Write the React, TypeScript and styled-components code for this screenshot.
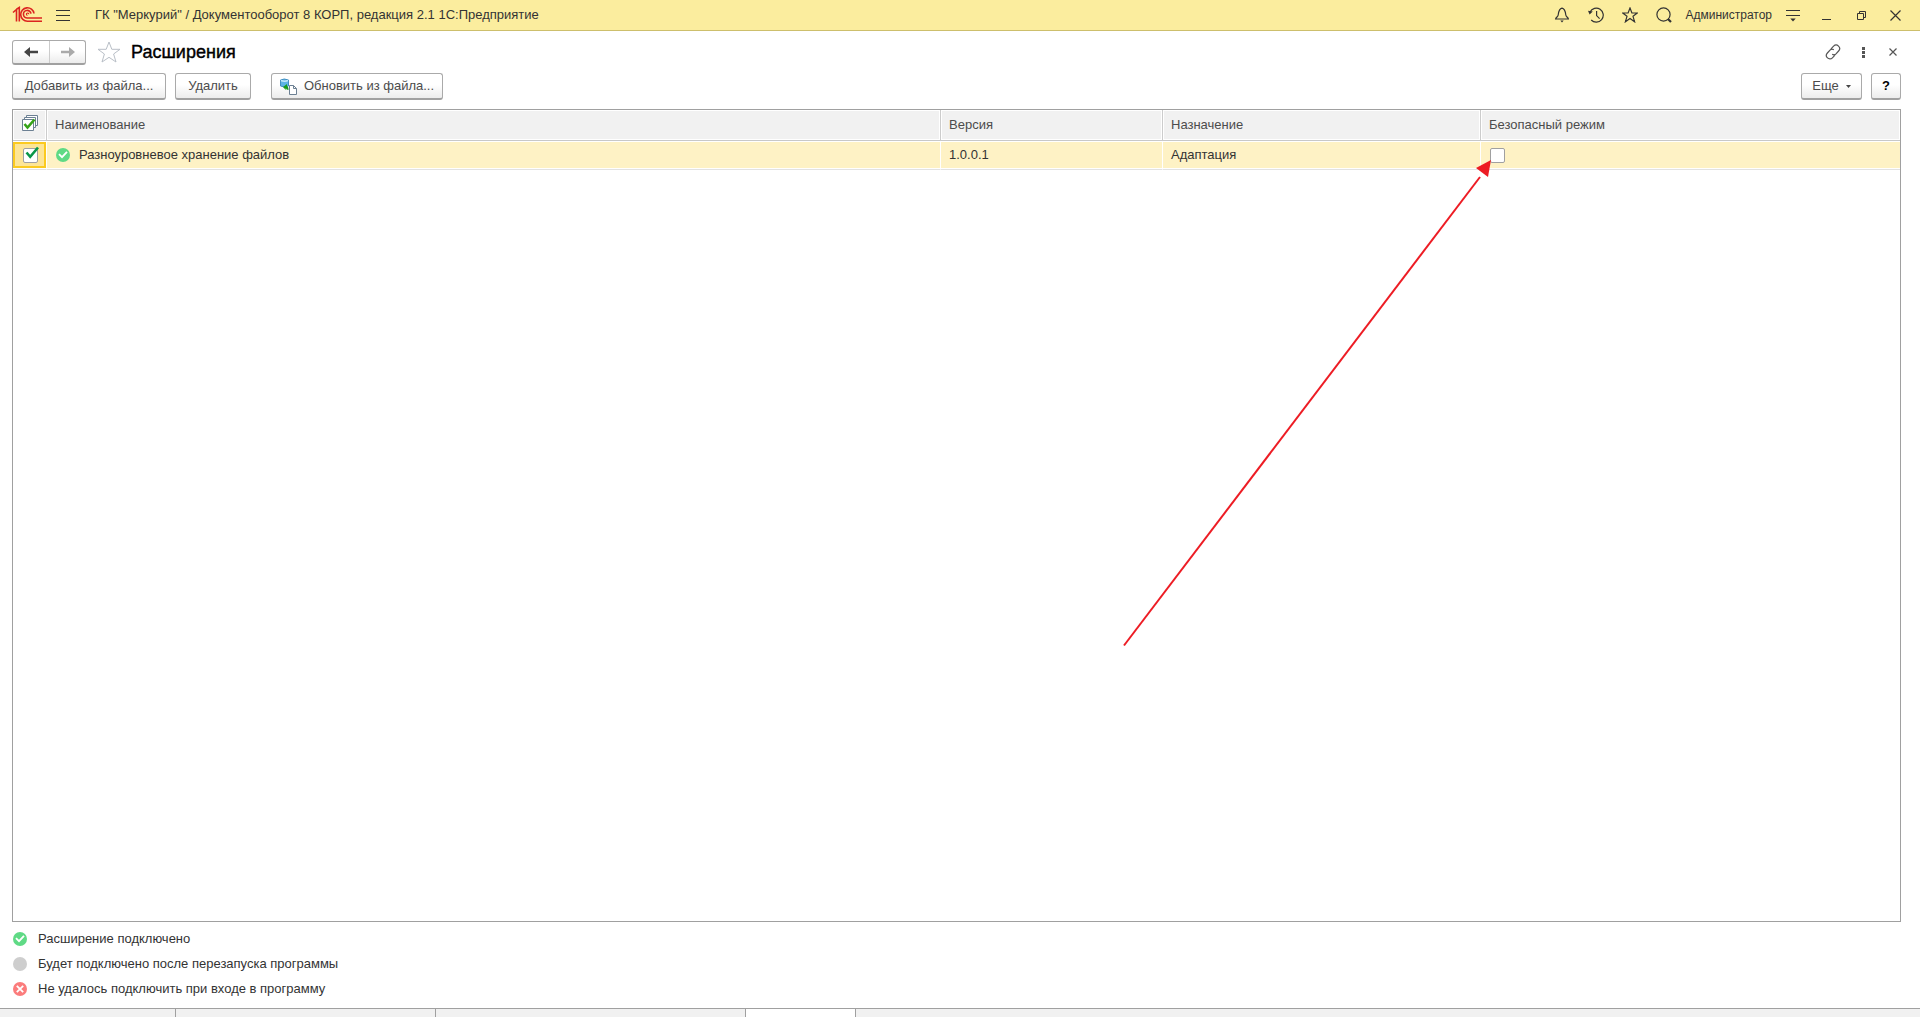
import React, { useState } from "react";
import styled, { createGlobalStyle } from "styled-components";

const GlobalStyle = createGlobalStyle`
  *, *::before, *::after { box-sizing: border-box; }
  body {
    margin: 0;
    background: #fff;
    color: #333;
    font: 13px/16px "Liberation Sans", Arial, sans-serif;
  }
  button, input { font: inherit; color: inherit; margin: 0; }
`;

const Page = styled.div`
  display: flex;
  flex-direction: column;
  min-height: 100vh;
`;

const TitleBar = styled.header`
  display: flex;
  align-items: center;
  height: 31px;
  padding: 0 8px 0 12px;
  background: #fbed9e;
  border-bottom: 1px solid #cdbf6c;
`;

const AppTitle = styled.span`
  flex: 1;
  margin-left: 12px;
  white-space: nowrap;
`;

const IconButton = styled.button<{ $w?: number }>`
  display: flex;
  align-items: center;
  justify-content: center;
  width: ${(p) => p.$w ?? 34}px;
  height: 24px;
  padding: 0;
  border: 0;
  background: none;
  color: #333;
`;

const UserButton = styled.button`
  padding: 0 4px;
  border: 0;
  background: none;
  font-size: 12px;
`;

const FormHeader = styled.div`
  display: flex;
  align-items: center;
  height: 42px;
  padding: 0 12px;
`;

const NavGroup = styled.div`
  display: flex;
  height: 25px;
  border: 1px solid #aaa;
  border-bottom: 2px solid #a0a0a0;
  border-radius: 3px;
  background: linear-gradient(#fff 45%, #ececec);
`;

const NavButton = styled.button<{ $divided?: boolean }>`
  display: flex;
  align-items: center;
  justify-content: center;
  width: 36px;
  padding: 0;
  border: 0;
  border-left: ${(p) => (p.$divided ? "1px solid #ccc" : "0")};
  background: none;
  color: ${(p) => (p.$divided ? "#aaa" : "#444")};
`;

const FormTitle = styled.h1`
  flex: 1;
  margin: 0;
  color: #000;
  font-size: 18px;
  line-height: 24px;
  font-weight: 400;
  -webkit-text-stroke: 0.4px #000;
`;

const Toolbar = styled.div`
  display: flex;
  align-items: center;
  gap: 9px;
  padding: 0 19px 9px 12px;
`;

const Spacer = styled.div<{ $w?: number }>`
  flex: ${(p) => (p.$w ? `0 0 ${p.$w}px` : "1")};
`;

const CommandButton = styled.button<{ $w: number; $strong?: boolean }>`
  display: flex;
  align-items: center;
  justify-content: center;
  gap: 7px;
  width: ${(p) => p.$w}px;
  height: 27px;
  padding: 0;
  border: 1px solid #aaa;
  border-bottom: 2px solid #a0a0a0;
  border-radius: 3px;
  background: linear-gradient(#fff 45%, #ececec);
  color: ${(p) => (p.$strong ? "#000" : "#4c4c4c")};
  font-weight: ${(p) => (p.$strong ? 700 : 400)};
  white-space: nowrap;
`;

const ListPane = styled.main`
  position: relative;
  flex: 1;
  margin: 0 19px 0 12px;
  border: 1px solid #a0a0a0;
`;

const Table = styled.table`
  width: 100%;
  table-layout: fixed;
  border-collapse: separate;
  border-spacing: 0;
`;

const Col = styled.col<{ $w?: number }>`
  width: ${(p) => (p.$w ? `${p.$w}px` : "auto")};
`;

const HeadCell = styled.th`
  height: 31px;
  padding: 0 8px;
  border-right: 1px solid #ccc;
  border-bottom: 1px solid #c8c8c8;
  background: #f1f1f1;
  box-shadow: inset 0 0 0 1px #fff;
  color: #4c4c4c;
  font-weight: 400;
  text-align: left;
  &:first-child { padding: 0 0 0 9px; }
  &:last-child { border-right: 0; }
`;

const Cell = styled.td`
  height: 29px;
  padding: 0 8px;
  border-right: 1px solid #fff;
  border-bottom: 1px solid #e2e2e2;
  background: #fef2c5;
  box-shadow: inset 0 1px #fff, inset 0 -1px #fff;
  &:last-child { border-right: 0; }
`;

const CurrentCell = styled(Cell)`
  padding: 1px 0;
`;

const Focus = styled.div`
  display: flex;
  align-items: center;
  height: 26px;
  padding-left: 7px;
  border: 2px solid #fbca20;
  background: #fde596;
`;

const NameContent = styled.div`
  display: flex;
  align-items: center;
  gap: 9px;
  padding-left: 1px;
`;

const CheckLabel = styled.label`
  position: relative;
  display: flex;
  width: 15px;
  height: 15px;
  margin-left: 1px;
`;

const CheckInput = styled.input`
  appearance: none;
  width: 15px;
  height: 15px;
  border: 1px solid #a0a0a0;
  border-radius: 2px;
  background: #fff;
  & + svg { display: none; }
  &:checked + svg { display: block; }
`;

const CheckMark = styled.svg`
  position: absolute;
  left: 2px;
  top: -2px;
  pointer-events: none;
`;

const Arrow = styled.svg`
  position: absolute;
  top: 50px;
  right: 408px;
  pointer-events: none;
`;

const Legend = styled.ul`
  margin: 0;
  padding: 4px 12px 7px;
  list-style: none;
`;

const LegendItem = styled.li`
  display: flex;
  align-items: center;
  gap: 11px;
  height: 25px;
  padding-left: 1px;
`;

const WindowTabs = styled.footer`
  display: flex;
  height: 9px;
  border-top: 1px solid #a0a0a0;
  background: #f1f1f1;
`;

const WindowTab = styled.div<{ $w: number; $active?: boolean }>`
  width: ${(p) => p.$w}px;
  border-right: 1px solid #a0a0a0;
  background: ${(p) => (p.$active ? "#fff" : "transparent")};
`;

function Logo() {
  return (
    <svg width="31" height="18" viewBox="0 0 31 18" fill="none" stroke="#dc2420" strokeWidth="1.6" aria-hidden="true">
      <path d="M1 6.5 4.5 3.5V15.5M4.5 3.2 7.3 1.5V15.5" />
      <path d="M22 7.5A6.7 6.7 0 1 0 15.5 15.2H30" />
      <path d="M19 7.6A3.8 3.8 0 1 0 15.5 12H30" />
      <path d="M16.8 8.2A1.2 1.2 0 1 0 15.5 9.4" strokeWidth="1.2" />
    </svg>
  );
}

function Status({ kind }: { kind: "ok" | "wait" | "fail" }) {
  const fill = { ok: "#5fda85", wait: "#cecece", fail: "#fb7c7c" }[kind];
  return (
    <svg width="14" height="14" viewBox="0 0 14 14" fill="none" stroke="#fff" strokeWidth="1.8" aria-hidden="true">
      <circle cx="7" cy="7" r="7" fill={fill} stroke="none" />
      {kind === "ok" && <path d="M3 6.2 6 9.2 11 3.8" />}
      {kind === "fail" && <path d="M3.8 3.8 10.2 10.2M10.2 3.8 3.8 10.2" />}
    </svg>
  );
}

function ArrowIcon({ back }: { back?: boolean }) {
  return (
    <svg width="14" height="10" viewBox="0 0 14 10" aria-hidden="true">
      <path
        d={back ? "M0 5 6 0V10ZM4 3.7H14V6.3H4Z" : "M14 5 8 0V10ZM10 3.7H0V6.3H10Z"}
        fill="currentColor"
      />
    </svg>
  );
}

const stroke = { fill: "none", stroke: "currentColor", strokeWidth: 1.2 };

export default function App() {
  const [active, setActive] = useState(true);
  const [safe, setSafe] = useState(false);

  return (
    <Page>
      <GlobalStyle />
      <TitleBar>
        <Logo />
        <IconButton $w={40} aria-label="Меню">
          <svg width="16" height="13" viewBox="0 0 16 13" {...stroke}>
            <path d="M1 1.5H15M1 6.5H15M1 11.5H15" strokeWidth="1" />
          </svg>
        </IconButton>
        <AppTitle as="span" style={undefined}>
          ГК "Меркурий" / Документооборот 8 КОРП, редакция 2.1 1С:Предприятие
        </AppTitle>
        <IconButton aria-label="Оповещения">
          <svg width="16" height="16" viewBox="0 0 16 16" {...stroke}>
            <path d="M8 1.2C4.8 2 4.6 5 4.2 8 4 9.8 1.8 10.6 1.6 12H14.4C14.2 10.6 12 9.8 11.8 8 11.4 5 11.2 2 8 1.2Z" />
            <path d="M6.3 13.5H9.7L8 15.5Z" fill="currentColor" stroke="none" />
          </svg>
        </IconButton>
        <IconButton aria-label="История">
          <svg width="16" height="16" viewBox="0 0 16 16" {...stroke}>
            <path d="M2 5A7 7 0 1 1 3.2 13M8.6 4V8.6L11.6 11.6" />
            <path d="M0 3.8 4.8 4.5 1.6 7.5Z" fill="currentColor" stroke="none" />
          </svg>
        </IconButton>
        <IconButton aria-label="Избранное">
          <svg width="16" height="16" viewBox="0 0 16 16" {...stroke}>
            <path d="M8 1 9.9 6H15.3L11 9.3 12.6 14.8 8 11.5 3.4 14.8 5 9.3.7 6H6.1Z" />
          </svg>
        </IconButton>
        <IconButton aria-label="Поиск">
          <svg width="16" height="16" viewBox="0 0 16 16" {...stroke}>
            <circle cx="7.5" cy="7.5" r="6.6" />
            <path d="M12 12 15 15" strokeWidth="2.2" />
          </svg>
        </IconButton>
        <UserButton>Администратор</UserButton>
        <IconButton aria-label="Настройки">
          <svg width="14" height="14" viewBox="0 0 14 14" {...stroke}>
            <path d="M0 2.5H14M0 7.5H14" strokeWidth="1" />
            <path d="M4.3 10.5H9.7L7 13.5Z" fill="currentColor" stroke="none" />
          </svg>
        </IconButton>
        <IconButton aria-label="Свернуть">
          <svg width="10" height="12" viewBox="0 0 10 12" {...stroke}>
            <path d="M0 10.5H9" strokeWidth="1" />
          </svg>
        </IconButton>
        <IconButton aria-label="Развернуть">
          <svg width="9" height="9" viewBox="0 0 9 9" {...stroke} strokeWidth="1">
            <path d="M.5 2.5H6.5V8.5H.5ZM2.5 2.5V.5H8.5V6.5H6.5" />
          </svg>
        </IconButton>
        <IconButton aria-label="Закрыть окно">
          <svg width="11" height="11" viewBox="0 0 11 11" {...stroke}>
            <path d="M.5.5 10.5 10.5M10.5.5.5 10.5" />
          </svg>
        </IconButton>
      </TitleBar>

      <FormHeader>
        <NavGroup>
          <NavButton aria-label="Назад"><ArrowIcon back /></NavButton>
          <NavButton $divided aria-label="Вперед"><ArrowIcon /></NavButton>
        </NavGroup>
        <IconButton $w={45} aria-label="Добавить в избранное">
          <svg width="24" height="22" viewBox="0 0 24 22" fill="none" stroke="#b9bfc7" strokeWidth="1">
            <path d="M12 1 14.8 8.3H23L16.6 13 19 21 12 16.3 5 21 7.4 13 1 8.3H9.2Z" />
          </svg>
        </IconButton>
        <FormTitle>Расширения</FormTitle>
        <IconButton $w={30} aria-label="Ссылка">
          <svg width="16" height="16" viewBox="0 0 16 16" {...stroke} stroke="#555">
            <path d="M6 4.8 8.6 2.2A3.2 3.2 0 0 1 13.6 7L11 9.8A3 3 0 0 1 7.2 10.2M10 11.2 7.4 13.8A3.2 3.2 0 0 1 2.4 9L5 6.2A3 3 0 0 1 8.8 5.8" />
          </svg>
        </IconButton>
        <IconButton $w={30} aria-label="Дополнительно">
          <svg width="3" height="11" viewBox="0 0 3 11" fill="#555">
            <path d="M0 0H3V3H0ZM0 4H3V7H0ZM0 8H3V11H0Z" />
          </svg>
        </IconButton>
        <IconButton $w={30} aria-label="Закрыть">
          <svg width="8" height="8" viewBox="0 0 8 8" {...stroke} stroke="#555">
            <path d="M.5.5 7.5 7.5M7.5.5.5 7.5" />
          </svg>
        </IconButton>
      </FormHeader>

      <Toolbar>
        <CommandButton $w={154}>Добавить из файла...</CommandButton>
        <CommandButton $w={76}>Удалить</CommandButton>
        <Spacer $w={2} />
        <CommandButton $w={172}>
          <svg width="17" height="17" viewBox="0 0 17 17" aria-hidden="true">
            <path d="M.5 2Q4 0 8.5 2V8Q4 10 .5 8Z" fill="#5db4e6" stroke="#438fc0" />
            <path d="M1 2.5Q4.5 3.8 8 2.5" fill="none" stroke="#c7e9fa" strokeWidth="1.5" />
            <path d="M3 9 7 6V8Q8.5 8.5 8.5 12Q6 12 5.8 10V12Z" fill="#169b19" />
            <path d="M9.5 7.5H13.5L16.5 10.5V16.5H9.5ZM13.5 7.5V10.5H16.5" fill="#fff" stroke="#6c8093" />
          </svg>
          Обновить из файла...
        </CommandButton>
        <Spacer />
        <CommandButton $w={61}>
          Еще
          <svg width="5" height="3" viewBox="0 0 5 3" aria-hidden="true"><path d="M0 0H5L2.5 3Z" fill="#444" /></svg>
        </CommandButton>
        <CommandButton $w={30} $strong aria-label="Справка">?</CommandButton>
      </Toolbar>

      <ListPane>
        <Table>
          <colgroup>
            <Col $w={34} /><Col /><Col $w={222} /><Col $w={318} /><Col $w={419} />
          </colgroup>
          <thead>
            <tr>
              <HeadCell aria-label="Активность">
                <svg width="16" height="16" viewBox="0 0 16 16" aria-hidden="true">
                  <path d="M4.5.5H15.5V10.5H4.5Z" fill="#fff" stroke="#6c8093" />
                  <path d="M2.5 2.5H13.5V12.5H2.5Z" fill="#fff" stroke="#6c8093" />
                  <path d="M.5 4.5H11.5V15.5H.5Z" fill="#fff" stroke="#6c8093" />
                  <path d="M2.5 9 5.5 12.5 12.5 4.5" fill="none" stroke="#36a317" strokeWidth="2.6" />
                </svg>
              </HeadCell>
              <HeadCell>Наименование</HeadCell>
              <HeadCell>Версия</HeadCell>
              <HeadCell>Назначение</HeadCell>
              <HeadCell>Безопасный режим</HeadCell>
            </tr>
          </thead>
          <tbody>
            <tr>
              <CurrentCell>
                <Focus>
                  <CheckLabel>
                    <CheckInput type="checkbox" aria-label="Активность" checked={active} onChange={() => setActive(!active)} />
                    <CheckMark width="15" height="14" viewBox="0 0 15 14">
                      <path d="M1.5 6.5 5.2 10.8 13 1.5" fill="none" stroke="#0a9648" strokeWidth="2.6" />
                    </CheckMark>
                  </CheckLabel>
                </Focus>
              </CurrentCell>
              <Cell>
                <NameContent><Status kind="ok" />Разноуровневое хранение файлов</NameContent>
              </Cell>
              <Cell>1.0.0.1</Cell>
              <Cell>Адаптация</Cell>
              <Cell>
                <CheckLabel>
                  <CheckInput type="checkbox" aria-label="Безопасный режим" checked={safe} onChange={() => setSafe(!safe)} />
                  <CheckMark width="15" height="14" viewBox="0 0 15 14">
                    <path d="M1.5 6.5 5.2 10.8 13 1.5" fill="none" stroke="#0a9648" strokeWidth="2.6" />
                  </CheckMark>
                </CheckLabel>
              </Cell>
            </tr>
          </tbody>
        </Table>
        <Arrow width="370" height="488" viewBox="0 0 370 488" aria-hidden="true">
          <path d="M2 485.5 358 17" stroke="#ed1c24" strokeWidth="2" />
          <path d="M369 0 366 17 354 8Z" fill="#ed1c24" />
        </Arrow>
      </ListPane>

      <Legend>
        <LegendItem><Status kind="ok" />Расширение подключено</LegendItem>
        <LegendItem><Status kind="wait" />Будет подключено после перезапуска программы</LegendItem>
        <LegendItem><Status kind="fail" />Не удалось подключить при входе в программу</LegendItem>
      </Legend>

      <WindowTabs>
        <WindowTab $w={176} />
        <WindowTab $w={260} />
        <WindowTab $w={310} />
        <WindowTab $w={110} $active />
      </WindowTabs>
    </Page>
  );
}
